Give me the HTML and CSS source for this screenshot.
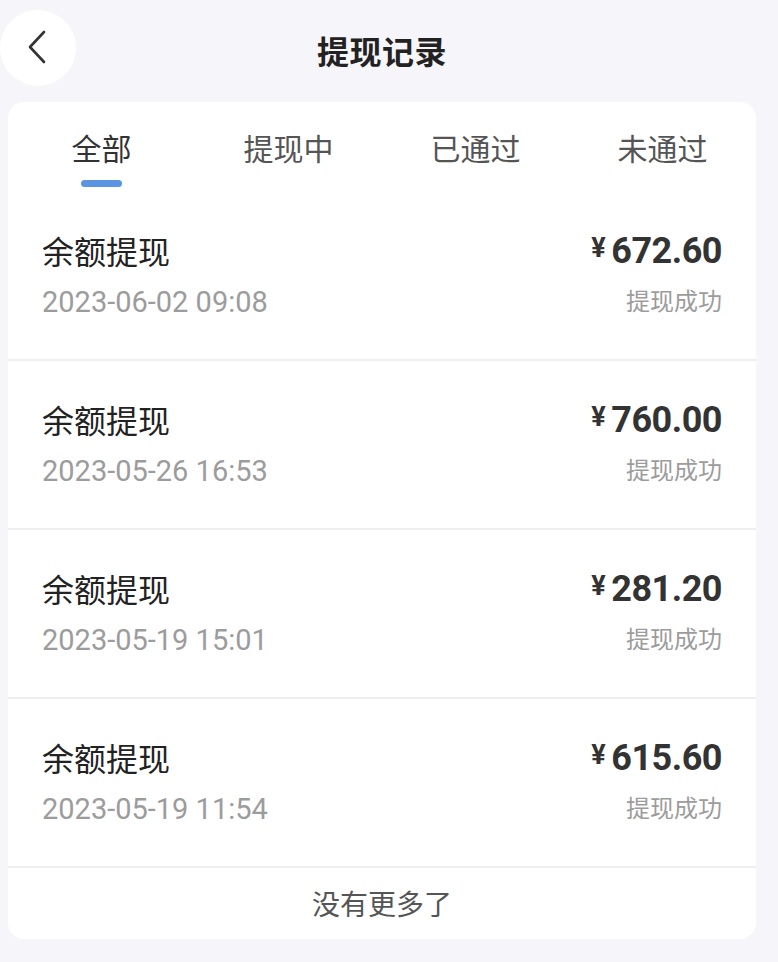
FILE: index.html
```html
<!DOCTYPE html>
<html lang="zh-CN">
<head>
    <meta charset="UTF-8">
    <meta name="viewport" content="width=device-width, initial-scale=1.0">
    <title>提现记录</title>
    <link rel="stylesheet" href="styles.css">
</head>
<body>

<div class="page">
    <header class="nav-bar">
        <button class="back-button" aria-label="返回">
            <svg width="22" height="36" viewBox="0 0 22 36">
                <path d="M18 2 L4 17 L18 32" fill="none" stroke="#333" stroke-width="2.6" stroke-linecap="round" stroke-linejoin="round"/>
            </svg>
        </button>
        <h1 class="nav-title">提现记录</h1>
        <span></span>
    </header>

    <main class="record-card">
        <nav class="tabs">
            <a class="tab active">全部</a>
            <a class="tab">提现中</a>
            <a class="tab">已通过</a>
            <a class="tab">未通过</a>
        </nav>

        <ul class="record-list">
            <li class="record">
                <div class="record-info">
                    <div class="record-title">余额提现</div>
                    <div class="record-time">2023-06-02 09:08</div>
                </div>
                <div class="record-side">
                    <div class="record-amount"><span class="currency">¥</span>672.60</div>
                    <div class="record-status">提现成功</div>
                </div>
            </li>
            <li class="record">
                <div class="record-info">
                    <div class="record-title">余额提现</div>
                    <div class="record-time">2023-05-26 16:53</div>
                </div>
                <div class="record-side">
                    <div class="record-amount"><span class="currency">¥</span>760.00</div>
                    <div class="record-status">提现成功</div>
                </div>
            </li>
            <li class="record">
                <div class="record-info">
                    <div class="record-title">余额提现</div>
                    <div class="record-time">2023-05-19 15:01</div>
                </div>
                <div class="record-side">
                    <div class="record-amount"><span class="currency">¥</span>281.20</div>
                    <div class="record-status">提现成功</div>
                </div>
            </li>
            <li class="record">
                <div class="record-info">
                    <div class="record-title">余额提现</div>
                    <div class="record-time">2023-05-19 11:54</div>
                </div>
                <div class="record-side">
                    <div class="record-amount"><span class="currency">¥</span>615.60</div>
                    <div class="record-status">提现成功</div>
                </div>
            </li>
        </ul>

        <div class="list-end">没有更多了</div>
    </main>
</div>

</body>
</html>
```

FILE: styles.css
```css
/* Basic Reset */
*,
*::before,
*::after {
    box-sizing: border-box;
    margin: 0;
    padding: 0;
}

html, body {
    background-color: #f6f6fa;
    font-family: Roboto, "Noto Sans CJK SC", sans-serif;
    color: #333333;
}

.page {
    width: 764px;
}

/* --- Nav bar --- */
.nav-bar {
    display: grid;
    grid-template-columns: 1fr auto 1fr;
    align-items: center;
    height: 100px;
}

.back-button {
    width: 76px;
    height: 76px;
    margin-top: -4px;
    border: none;
    border-radius: 50%;
    background: #ffffff;
    display: flex;
    align-items: center;
    justify-content: center;
    padding-right: 2px;
    cursor: pointer;
}

.nav-title {
    font-size: 32px;
    font-weight: 700;
    color: #222222;
    letter-spacing: 0.5px;
}

/* --- Card --- */
.record-card {
    margin: 2px 8px 0 8px;
    background: #ffffff;
    border-radius: 16px;
    overflow: hidden;
}

.tabs {
    display: grid;
    grid-template-columns: repeat(4, 1fr);
    height: 90px;
    padding-top: 28px;
}

.tab {
    display: flex;
    flex-direction: column;
    align-items: center;
    font-size: 30px;
    line-height: 40px;
    color: #555555;
    cursor: pointer;
}

.tab.active {
    color: #333333;
}

.tab.active::after {
    content: "";
    width: 41px;
    height: 7px;
    margin-top: 10px;
    border-radius: 4px;
    background: #5b94e2;
}

/* --- Records --- */
.record-list {
    list-style: none;
}

.record {
    display: flex;
    justify-content: space-between;
    height: 169px;
    padding: 40px 34px 0 34px;
    border-bottom: 2px solid #eeeeee;
}

.record-title {
    font-size: 32px;
    line-height: 42px;
    color: #222222;
}

.record-time {
    margin-top: 6px;
    font-size: 29px;
    line-height: 44px;
    color: #9c9c9c;
}

.record-side {
    text-align: right;
}

.record-amount {
    margin-top: -5px;
    font-size: 36px;
    line-height: 42px;
    font-weight: 700;
    letter-spacing: -0.5px;
    color: #333333;
}

.currency {
    font-size: 27px;
    margin-right: 6px;
    vertical-align: 6px;
}

.record-status {
    margin-top: 8px;
    font-size: 24px;
    line-height: 44px;
    color: #9c9c9c;
}

.list-end {
    height: 71px;
    padding-top: 4px;
    line-height: 67px;
    text-align: center;
    font-size: 28px;
    color: #555555;
}
```
